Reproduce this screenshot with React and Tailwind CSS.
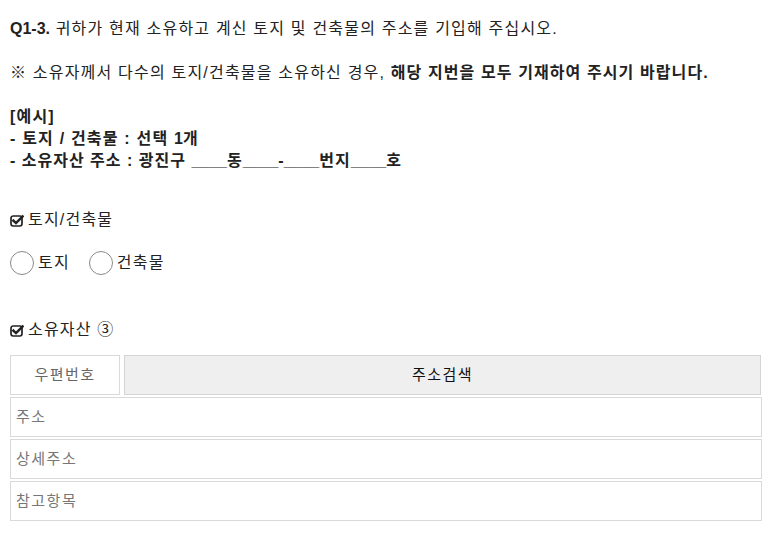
import React from "react";

const font = { fontFamily: '"Liberation Sans", "Noto Sans CJK KR", sans-serif' };

function CheckIcon() {
  return (
    <svg width="14" height="13" viewBox="0 0 14 13" className="shrink-0">
      <rect x="1" y="2" width="11" height="10" rx="2.2" fill="none" stroke="#222" strokeWidth="1.7" />
      <path d="M3.4 6.6 L6 9.1 L12.6 2.4" fill="none" stroke="#222" strokeWidth="2.5" strokeLinecap="square" />
    </svg>
  );
}

function Radio({ label }) {
  return (
    <label className="flex items-center gap-[4px]">
      <span className="w-[24px] h-[24px] rounded-full border border-[#8a8a8a] bg-white block" />
      <span>{label}</span>
    </label>
  );
}

export default function App() {
  return (
    <div className="bg-white text-[#222] text-[16px] tracking-[1.2px] leading-[22px] px-[10px] pt-[18px] w-[771px] h-[554px]" style={font}>
      <p>
        <b className="tracking-normal">Q1-3.</b> 귀하가 현재 소유하고 계신 토지 및 건축물의 주소를 기입해 주십시오.
      </p>
      <p className="h-[22px]"></p>
      <p>
        ※ 소유자께서 다수의 토지/건축물을 소유하신 경우, <b className="tracking-[1.1px]">해당 지번을 모두 기재하여 주시기 바랍니다.</b>
      </p>
      <p className="h-[22px]"></p>
      <p className="font-bold">[예시]</p>
      <p className="font-bold">- 토지 / 건축물 : 선택 <span className="tracking-normal">1</span>개</p>
      <p className="font-bold tracking-[1px]">- 소유자산 주소 : 광진구 <span className="tracking-normal">____</span>동<span className="tracking-normal">____-____</span>번지<span className="tracking-normal">____</span>호</p>

      <div className="mt-[37px] flex items-center gap-[4px] h-[22px]">
        <CheckIcon />
        <span>토지/건축물</span>
      </div>

      <div className="mt-[19px] flex items-center gap-[19px] h-[26px]">
        <Radio label="토지" />
        <Radio label="건축물" />
      </div>

      <div className="mt-[43px] flex items-center gap-[4px] h-[22px]">
        <CheckIcon />
        <span>소유자산 ③</span>
      </div>

      <div className="mt-[14px] w-[752px] flex flex-col gap-[2px] text-[15px] tracking-[1.5px]">
        <div className="flex gap-[4px] h-[40px]">
          <div className="w-[110px] border border-[#d9d9d9] flex items-center justify-center text-[#666]">우편번호</div>
          <div className="flex-1 border border-[#d4d4d4] bg-[#efefef] flex items-center justify-center text-[#111] mr-[1px]">주소검색</div>
        </div>
        <div className="h-[40px] border border-[#d9d9d9] flex items-center px-[5px] text-[#777]">주소</div>
        <div className="h-[40px] border border-[#d9d9d9] flex items-center px-[5px] text-[#777]">상세주소</div>
        <div className="h-[40px] border border-[#d9d9d9] flex items-center px-[5px] text-[#777]">참고항목</div>
      </div>
    </div>
  );
}
